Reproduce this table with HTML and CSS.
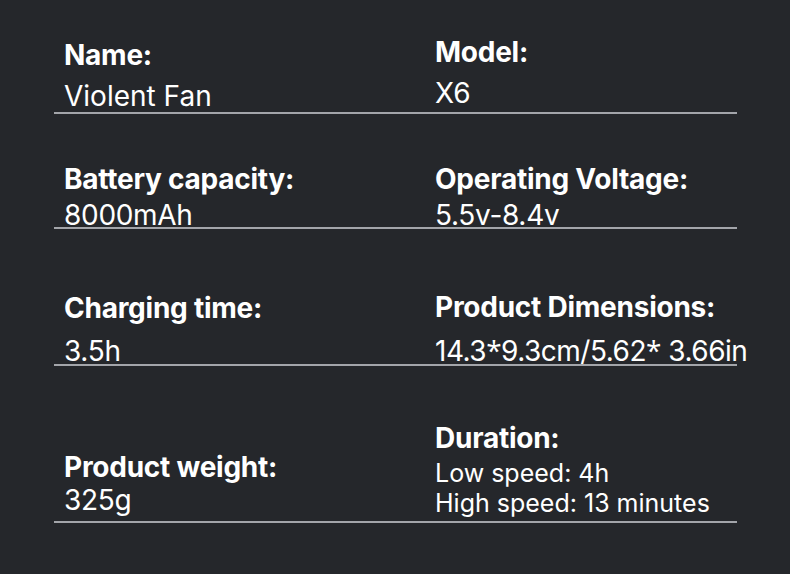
FILE: index.html
```html
<!DOCTYPE html>
<html lang="en">
<head>
<meta charset="utf-8">
<title>Specifications</title>
<link rel="stylesheet" href="styles.css">
</head>
<body>
<main class="specs">
  <section class="row r1">
    <div class="cell">
      <div class="label">Name:</div>
      <div class="val">Violent Fan</div>
    </div>
    <div class="cell right">
      <div class="label">Model:</div>
      <div class="val">X6</div>
    </div>
  </section>
  <section class="row r2">
    <div class="cell">
      <div class="label">Battery capacity:</div>
      <div class="val num">8000mAh</div>
    </div>
    <div class="cell right">
      <div class="label">Operating Voltage:</div>
      <div class="val num">5.5v-8.4v</div>
    </div>
  </section>
  <section class="row r3">
    <div class="cell">
      <div class="label">Charging time:</div>
      <div class="val num">3.5h</div>
    </div>
    <div class="cell right">
      <div class="label">Product Dimensions:</div>
      <div class="val dims">14.3<span class="ast">*</span>9.3cm/5.62<span class="ast">*</span> 3.66in</div>
    </div>
  </section>
  <section class="row r4">
    <div class="cell">
      <div class="label">Product weight:</div>
      <div class="val num">325g</div>
    </div>
    <div class="cell right small">
      <div class="label">Duration:</div>
      <div class="val">Low speed: 4h</div>
      <div class="val">High speed: 13 minutes</div>
    </div>
  </section>
</main>
</body>
</html>
```
FILE: styles.css
```css
html, body {
  margin: 0;
  padding: 0;
  background: #25272b;
}
body {
  width: 790px;
  height: 574px;
  overflow: hidden;
  font-family: Inter, "Liberation Sans", sans-serif;
  color: #ffffff;
}
.specs {
  margin-left: 54px;
  width: 683px;
  display: flex;
  flex-direction: column;
}
.row {
  display: grid;
  grid-template-columns: 381px 1fr;
  align-items: end;
  border-bottom: 2px solid #a3a5aa;
}
.cell {
  padding-left: 10px;
  display: flex;
  flex-direction: column;
}
.cell.right {
  padding-left: 0;
}
.label {
  font-size: 28px;
  font-weight: 700;
  line-height: 30px;
  letter-spacing: -0.25px;
  white-space: nowrap;
}
.val {
  font-size: 28px;
  font-weight: 400;
  line-height: 30px;
  white-space: nowrap;
}
.num {
  letter-spacing: -0.3px;
}
.dims {
  letter-spacing: -0.5px;
}
.ast {
  font-family: "Open Sans", sans-serif;
}

.r1 { padding-top: 37px; }
.r1 .val { margin-top: 11px; margin-bottom: 1px; }
.r1 .right { margin-bottom: 3px; }

.r2 { padding-top: 50px; }
.r2 .val { margin-top: 6px; margin-bottom: -3px; }

.r3 { padding-top: 63px; }
.r3 .val { margin-top: 13px; margin-bottom: -2px; }

.r4 .cell { margin-bottom: 6px; }
.r4 .val { margin-top: 3px; }
.r4 .small { margin-bottom: 3px; padding-top: 56px; }
.small .label { font-size: 28px; line-height: 32px; margin-bottom: 4px; }
.small .val { font-size: 25px; line-height: 30px; margin-top: 0; }
```
